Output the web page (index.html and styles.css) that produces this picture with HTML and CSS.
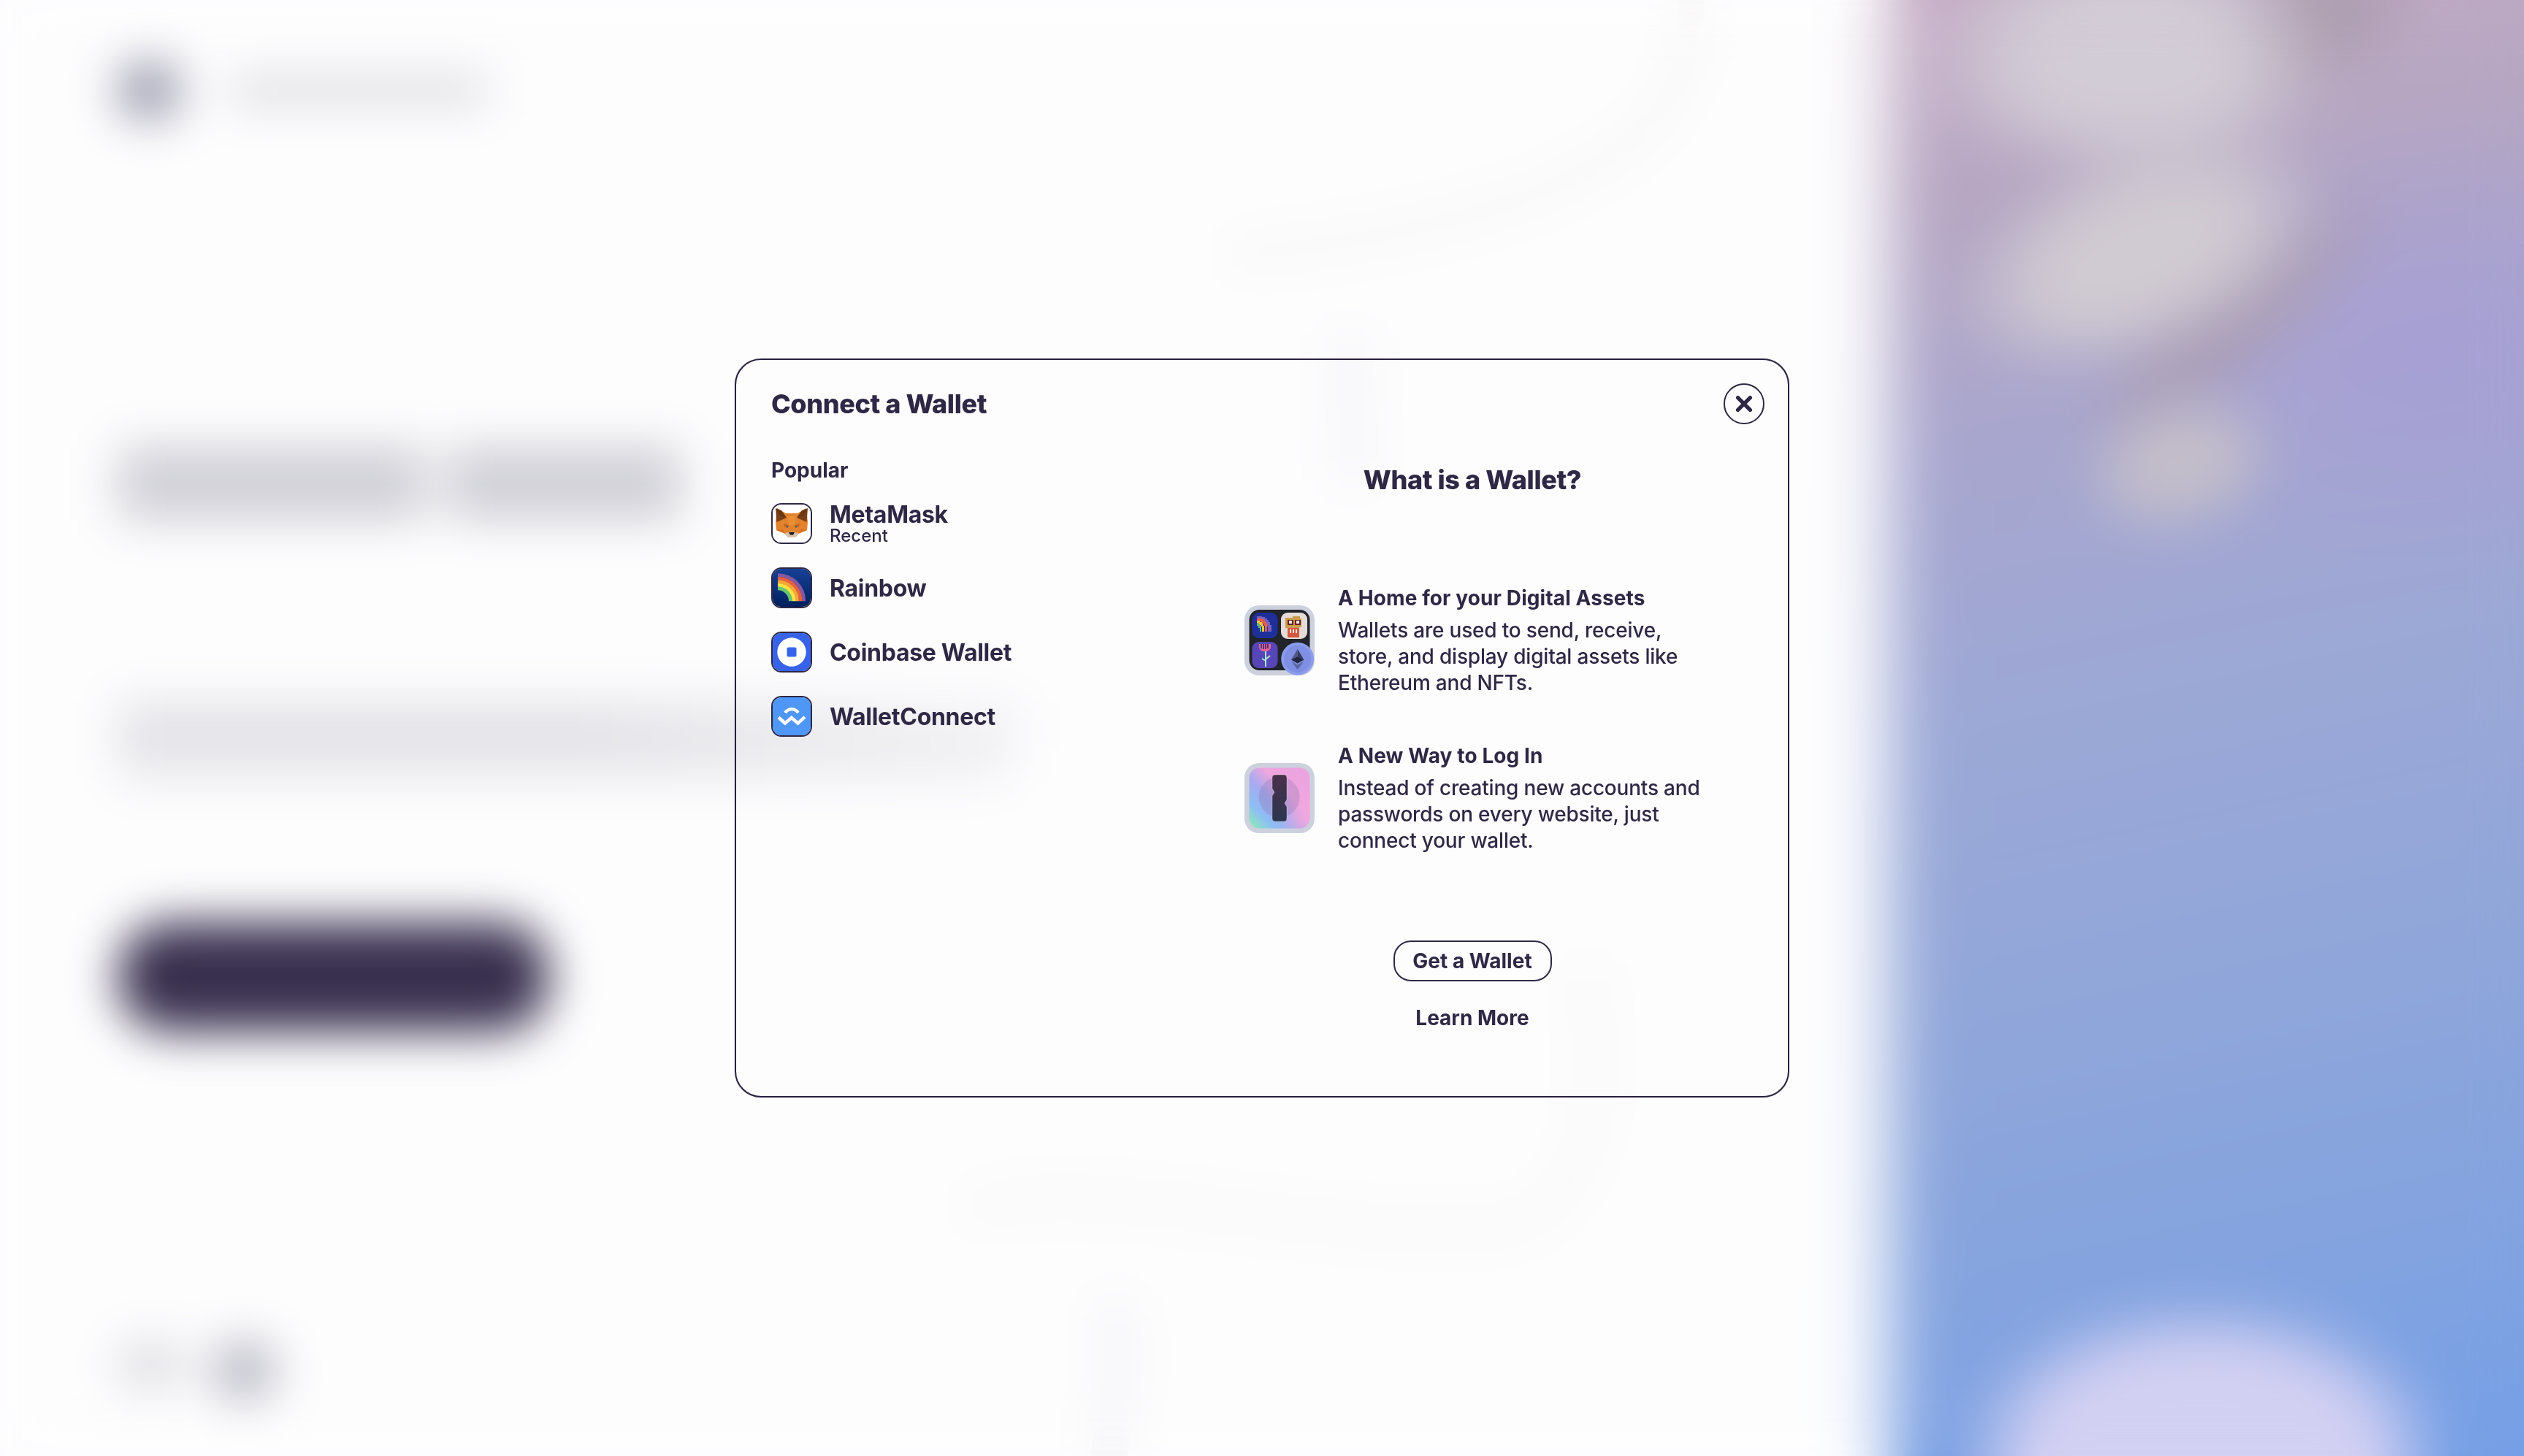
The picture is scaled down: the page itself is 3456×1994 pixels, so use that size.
FILE: index.html
```html
<!DOCTYPE html>
<html lang="en">
<head>
<meta charset="utf-8">
<title>Connect a Wallet</title>
<link rel="stylesheet" href="styles.css">
</head>
<body>
<div class="page" aria-hidden="true">
  <div class="bg-left">
    <div class="bg-logo"><span class="bg-mark"></span><span class="bg-name"></span></div>
    <div class="bg-heading"><span class="bg-word-a"></span><span class="bg-word-b"></span></div>
    <div class="bg-para"></div>
    <div class="bg-para-2"></div>
    <div class="bg-cta"></div>
    <div class="bg-socials"><span class="bg-soc-a"></span><span class="bg-soc-b"></span></div>
    <svg class="bg-swirl" viewBox="0 100 1336 1994" fill="none">
      <path d="M1130 60C1170 280 1000 400 500 450" stroke="#f8f7f6" stroke-width="36"/>
      <path d="M670 560C660 640 680 680 670 760" stroke="#f6f6f8" stroke-width="50"/>
      <path d="M990 1420C1020 1600 1000 1760 880 1780C600 1800 300 1700 140 1760" stroke="#f8f8f9" stroke-width="40"/>
      <path d="M340 1880C370 1960 330 2060 340 2154" stroke="#f6f6f8" stroke-width="50"/>
    </svg>
  </div>
  <div class="bg-right">
    <div class="cloud band-e"></div>
    <div class="cloud band-f"></div>
    <div class="cloud cloud-a"></div>
    <div class="cloud cloud-b"></div>
    <div class="cloud cloud-c"></div>
    <div class="cloud cloud-d"></div>
  </div>
</div>

<div class="overlay">
  <section class="modal">
    <button class="close" aria-label="Close">
      <svg viewBox="0 0 20 20" width="24" height="24"><path d="M3 3 17 17M17 3 3 17" stroke="#2f2845" stroke-width="4.4" stroke-linecap="round"/></svg>
    </button>
    <div class="col-left">
      <h2 class="title">Connect a Wallet</h2>
      <h3 class="group">Popular</h3>
      <ul class="wallets">
        <li class="wallet">
          <span class="w-icon">
            <svg viewBox="2 2 52 52">
              <rect width="56" height="56" fill="#fff"/>
              <path d="M8 7 20 14H36L48 7 50 26 49 37 38 41 33 47H23L18 41 7 37 6 26Z" fill="#e2822c"/>
              <path d="M6 7 21 20 7.500 26Z" fill="#763e1a"/>
              <path d="M50 7 35 20 48.500 26Z" fill="#763e1a"/>
              <path d="M6 7 14 10 21 20 12 17Z" fill="#6b3712"/>
              <path d="M50 7 42 10 35 20 44 17Z" fill="#6b3712"/>
              <path d="M22 18H34L32 30H24Z" fill="#e88f35"/>
              <path d="M7 37 15 36 19 42Z M49 37 41 36 37 42Z" fill="#d7701f"/>
              <path d="M17 28 24 30 22 34 18 32Z M39 28 32 30 34 34 38 32Z" fill="#c0651c"/>
              <path d="M20 31 24 32 22 34Z M36 31 32 32 34 34Z" fill="#3e5b78"/>
              <path d="M19 41 28 39 37 41 33 47H23Z" fill="#d6c4b2"/>
              <path d="M24 40H32L30 43.500H26Z" fill="#1c1510"/>
            </svg>
          </span>
          <span class="w-text"><span class="w-name">MetaMask</span><span class="w-sub">Recent</span></span>
        </li>
        <li class="wallet">
          <span class="w-icon">
            <svg viewBox="2 2 52 52" fill="none">
              <defs><linearGradient id="rb" x1="0" y1="0" x2="0" y2="1"><stop offset="0" stop-color="#174299"/><stop offset="1" stop-color="#001e59"/></linearGradient></defs>
              <rect width="56" height="56" fill="url(#rb)"/>
              <path d="M9 10.600A35.700 35.700 0 0 1 44.700 46.300" stroke="#86589f" stroke-width="4.800"/>
              <path d="M9 15.300A31 31 0 0 1 40 46.300" stroke="#e7603e" stroke-width="4.800"/>
              <path d="M9 19.800A26.500 26.500 0 0 1 35.500 46.300" stroke="#fba636" stroke-width="4.800"/>
              <path d="M9 24.300A22 22 0 0 1 31 46.300" stroke="#fbe544" stroke-width="4.800"/>
              <path d="M9 28.900A17.400 17.400 0 0 1 26.400 46.300" stroke="#69c66f" stroke-width="4.800"/>
            </svg>
          </span>
          <span class="w-text"><span class="w-name">Rainbow</span></span>
        </li>
        <li class="wallet">
          <span class="w-icon">
            <svg viewBox="2 2 52 52">
              <rect width="56" height="56" fill="#3763e8"/>
              <circle cx="28" cy="28" r="19.700" fill="#fff"/>
              <rect x="21.500" y="21.500" width="13" height="13" rx="2" fill="#3763e8"/>
            </svg>
          </span>
          <span class="w-text"><span class="w-name">Coinbase Wallet</span></span>
        </li>
        <li class="wallet">
          <span class="w-icon">
            <svg viewBox="2 2 52 52" fill="none">
              <rect width="56" height="56" fill="#4f97f6"/>
              <path d="M19 23C24 16.500 32 16.500 37 23" stroke="#fff" stroke-width="4.400"/>
              <path d="M10 29.500 19 37.500 27.800 30 36.500 37.500 46 28.800" stroke="#fff" stroke-width="4.400"/>
            </svg>
          </span>
          <span class="w-text"><span class="w-name">WalletConnect</span></span>
        </li>
      </ul>
    </div>
    <div class="col-right">
      <h2 class="title-center">What is a Wallet?</h2>
      <div class="infos">
        <div class="info">
          <span class="info-icon">
            <svg viewBox="0 0 96 96" fill="none">
              <rect width="96" height="96" rx="20" fill="#cdd1de"/>
              <rect x="6.500" y="6" width="83" height="83" rx="14" fill="#22242b"/>
              <rect x="10.500" y="10" width="35" height="35" rx="9" fill="#1f2f99"/>
              <path d="M17 15H23L25 16H28V18H31V20H33V23H35V27H37V36H32V29H30V25H28V23H25V21H22V19H17Z" fill="#7b62b8"/>
              <path d="M17 18H22L24 19H26V21H28V23H30V26H31V36H28V28H26V25H24V23H22V22H17Z" fill="#ee5e45"/>
              <path d="M17 21H21V23H24V25H25V28H27V36H24V29H22V27H20V25H17Z" fill="#f7c73f"/>
              <path d="M17 24H19V26H21V28H22V30H23V36H21V31H19V28H17Z" fill="#5ec276"/>
              <rect x="50" y="10" width="36" height="36" rx="9" fill="#e4dcd6"/>
              <path d="M56 17H66V15H76V18H78V30H75V42H59V31H56Z" fill="#cb9c4d"/>
              <rect x="59" y="20" width="8" height="7" fill="#6b1f24"/>
              <rect x="69" y="20" width="8" height="7" fill="#6b1f24"/>
              <rect x="61" y="21" width="4" height="4" fill="#f5efe4"/>
              <rect x="71" y="21" width="4" height="4" fill="#f5efe4"/>
              <rect x="59" y="31" width="16" height="13" fill="#d4593f"/>
              <rect x="62" y="33" width="2" height="5" fill="#f5efe4"/>
              <rect x="66" y="33" width="2" height="5" fill="#f5efe4"/>
              <rect x="70" y="33" width="2" height="5" fill="#f5efe4"/>
              <rect x="10.500" y="50" width="35" height="36" rx="9" fill="#5746b8"/>
              <path d="M20 53H36V57C36 61 32 63 28 63 24 63 20 61 20 57Z" fill="#e2649c"/>
              <path d="M23 53V59M26 53V60M29 53V60M32 53V59" stroke="#2a2560" stroke-width="1.500"/>
              <path d="M29 63V84M29 74 35 69M29 76 24 73" stroke="#a8ecd4" stroke-width="2"/>
              <circle cx="72.700" cy="73.300" r="22.500" fill="#8a9cec"/>
              <circle cx="72.700" cy="73.300" r="18.500" fill="#7f8fe3"/>
              <path d="M72.700 60 64 74.500 72.700 70Z" fill="#505a85"/>
              <path d="M72.700 60 81.400 74.500 72.700 70Z" fill="#343a5c"/>
              <path d="M64 74.500 72.700 70 81.400 74.500 72.700 79.500Z" fill="#22263f"/>
              <path d="M64 76.500 72.700 88 81.400 76.500 72.700 81.500Z" fill="#5a66a0"/>
            </svg>
          </span>
          <div class="info-text">
            <h4 class="info-title">A Home for your Digital Assets</h4>
            <p class="info-body">Wallets are used to send, receive, store, and display digital assets like Ethereum and NFTs.</p>
          </div>
        </div>
        <div class="info">
          <span class="info-icon">
            <svg viewBox="0 0 96 96" fill="none">
              <defs>
                <linearGradient id="k1" x1="1" y1="0" x2="0" y2="1">
                  <stop offset="0" stop-color="#e9a3e0"/>
                  <stop offset=".38" stop-color="#f0a6de"/>
                  <stop offset=".58" stop-color="#a8aaee"/>
                  <stop offset=".78" stop-color="#8dbdf6"/>
                  <stop offset="1" stop-color="#8cf0ae"/>
                </linearGradient>
                <radialGradient id="k2" cx="1" cy=".8" r=".5">
                  <stop offset="0" stop-color="#f0a8de"/>
                  <stop offset="1" stop-color="#f0a8de" stop-opacity="0"/>
                </radialGradient>
                <linearGradient id="k3" x1="0" y1="0" x2="0" y2="1">
                  <stop offset="0" stop-color="#4a304a"/>
                  <stop offset="1" stop-color="#2b3650"/>
                </linearGradient>
              </defs>
              <rect width="96" height="96" rx="20" fill="#cdd1de"/>
              <rect x="6.500" y="6.500" width="83" height="83" rx="14" fill="url(#k1)"/>
              <rect x="6.500" y="6.500" width="83" height="83" rx="14" fill="url(#k2)"/>
              <circle cx="47.700" cy="46.700" r="28" fill="#7b6ea5" fill-opacity=".26"/>
              <path d="M42 16H54a4 4 0 0 1 4 4V50l-3 5 3 5V76a4 4 0 0 1-4 4H42a4 4 0 0 1-4-4V45l3-5-3-5V20a4 4 0 0 1 4-4Z" fill="url(#k3)" stroke="#fff" stroke-opacity=".3" stroke-width="1"/>
            </svg>
          </span>
          <div class="info-text">
            <h4 class="info-title">A New Way to Log In</h4>
            <p class="info-body">Instead of creating new accounts and passwords on every website, just connect your wallet.</p>
          </div>
        </div>
      </div>
      <div class="actions">
        <button class="btn-outline">Get a Wallet</button>
        <a class="btn-link">Learn More</a>
      </div>
    </div>
  </section>
</div>
</body>
</html>
```
FILE: styles.css
```css
* { box-sizing: border-box; }
html, body { margin: 0; height: 100%; }
body {
  width: 3456px;
  height: 1994px;
  overflow: hidden;
  position: relative;
  background: #fdfdfe;
  font-family: Inter, "Liberation Sans", sans-serif;
  color: #2f2845;
}

/* Page behind the dialog, blurred by the overlay */
.page {
  display: flex;
  width: 3456px;
  height: 1994px;
  overflow: hidden;
  background: #fdfdfe;
}
.bg-left {
  position: relative;
  flex: 1;
  padding: 86px 0 0 162px;
  display: flex;
  flex-direction: column;
  align-items: flex-start;
}
.bg-logo { display: flex; align-items: center; gap: 70px; height: 76px; }
.bg-mark { width: 84px; height: 76px; border-radius: 30px; background: #9796aa; }
.bg-name { width: 350px; height: 36px; background: #d8d8de; }
.bg-heading { display: flex; gap: 30px; margin-top: 450px; height: 100px; }
.bg-word-a { width: 420px; background: #cfcfd6; }
.bg-word-b { width: 320px; background: #cfcfd6; }
.bg-para {
  margin-top: 248px;
  width: 1240px;
  height: 66px;
  background: linear-gradient(90deg, #e3e3e8 50%, #f4f4f6 100%);
}
.bg-para-2 { width: 1220px; height: 40px; background: linear-gradient(90deg, #e7e7eb 60%, #efeff2 100%); }
.bg-cta {
  margin-top: 197px;
  width: 590px;
  height: 150px;
  border-radius: 70px;
  background: #382f4e;
}
.bg-socials { display: flex; gap: 40px; margin-top: 426px; }
.bg-soc-a { width: 90px; height: 60px; border-radius: 24px; background: #dcdce2; }
.bg-soc-b { width: 84px; height: 76px; border-radius: 34px; background: #b3b3c0; }
.bg-swirl { position: absolute; left: 1180px; top: 0; width: 1336px; height: 1994px; }

.bg-right {
  position: relative;
  flex: 0 0 940px;
  background:
    linear-gradient(90deg, #fdfdfe 0, rgba(253,253,254,.82) 40px, rgba(253,253,254,.45) 75px, rgba(253,253,254,.14) 105px, rgba(253,253,254,0) 135px),
    radial-gradient(ellipse 420px 320px at 86% 24%, rgba(166,158,214,.8), rgba(166,160,210,0)),
    linear-gradient(168deg, #c7aec6 0%, #b6a6c2 14%, #a8a6ce 30%, #9ba8d6 48%, #8fa6da 68%, #82a3e0 86%, #759fe6 100%);
}
.cloud { position: absolute; }
.band-e { left: 254px; top: 355px; width: 580px; height: 160px; background: radial-gradient(closest-side, rgba(170,155,172,.7) 40%, rgba(170,155,172,0)); transform: rotate(-40deg); }
.band-f { left: 394px; top: -25px; width: 440px; height: 170px; background: radial-gradient(closest-side, rgba(170,155,172,.85) 40%, rgba(170,155,172,0)); transform: rotate(-20deg); }
.cloud-a { left: 110px; top: -70px; width: 580px; height: 320px; background: radial-gradient(closest-side, #d2ccd6 50%, rgba(210,204,214,0)); }
.cloud-b { left: 134px; top: 195px; width: 560px; height: 300px; background: radial-gradient(closest-side, #d0cad2 50%, rgba(208,202,210,0)); transform: rotate(-22deg); }
.cloud-c { left: 324px; top: 535px; width: 290px; height: 200px; background: radial-gradient(closest-side, #c4beca 45%, rgba(196,190,202,0)); transform: rotate(-16deg); }
.cloud-d { left: 154px; top: 1775px; width: 690px; height: 219px; border-radius: 50% 50% 0 0 / 100% 100% 0 0; background: radial-gradient(ellipse 345px 219px at 50% 100%, #d2d0f2 65%, rgba(210,208,242,0)); }

/* Dialog */
.overlay {
  position: absolute;
  inset: 0;
  display: flex;
  align-items: center;
  justify-content: center;
  backdrop-filter: blur(32px);
}
.modal {
  position: relative;
  display: flex;
  width: 1444px;
  height: 1012px;
  border: 2px solid #2a2240;
  border-radius: 36px;
  box-shadow: 0 0 1px rgba(42,34,64,.7);
}
.close {
  position: absolute;
  top: 32px;
  right: 32px;
  width: 56px;
  height: 56px;
  padding: 0;
  display: flex;
  align-items: center;
  justify-content: center;
  background: transparent;
  border: 2px solid #2f2845;
  border-radius: 50%;
}
.col-left { flex: 0 0 576px; padding: 38px 0 0 48px; }
.title {
  margin: 0;
  font-size: 36px;
  line-height: 44px;
  font-weight: 800;
  letter-spacing: -0.4px;
}
.group {
  margin: 51px 0 0;
  font-size: 28px;
  line-height: 36px;
  font-weight: 700;
}
.wallets { list-style: none; margin: 27px 0 0; padding: 0; display: flex; flex-direction: column; gap: 32px; }
.wallet { display: flex; align-items: center; gap: 24px; height: 56px; }
.w-icon {
  flex: none;
  width: 56px;
  height: 56px;
  border: 2px solid #2f2845;
  border-radius: 14px;
  overflow: hidden;
  display: block;
}
.w-icon svg { display: block; width: 52px; height: 52px; }
.w-text { display: flex; flex-direction: column; }
.w-name { font-size: 32px; line-height: 34px; font-weight: 700; letter-spacing: -0.3px; }
.w-name:only-child { padding-top: 2px; }
.w-sub { font-size: 24px; line-height: 24px; font-weight: 500; }

.col-right {
  flex: 1;
  display: flex;
  flex-direction: column;
  align-items: center;
  padding-top: 142px;
}
.title-center {
  margin: 0;
  font-size: 36px;
  line-height: 44px;
  font-weight: 800;
  letter-spacing: -0.4px;
}
.infos { display: flex; flex-direction: column; gap: 76px; margin-top: 128px; width: 624px; }
.info { display: flex; align-items: center; gap: 32px; height: 140px; }
.info-icon { flex: none; width: 96px; height: 96px; display: block; }
.info-icon svg { display: block; width: 96px; height: 96px; }
.info-text { flex: 1; }
.info-title { margin: 0 0 8px; font-size: 28px; line-height: 36px; font-weight: 700; letter-spacing: 0.1px; }
.info-body { margin: 0; font-size: 28px; line-height: 36px; font-weight: 500; letter-spacing: -0.2px; }

.actions { display: flex; flex-direction: column; align-items: center; gap: 32px; margin-top: 125px; }
.btn-outline {
  width: 217px;
  height: 56px;
  padding: 0;
  background: transparent;
  border: 2px solid #2f2845;
  border-radius: 24px;
  color: #2f2845;
  font: 700 28px/36px Inter, "Liberation Sans", sans-serif;
}
.btn-link { font-size: 28px; line-height: 36px; font-weight: 700; }
```
